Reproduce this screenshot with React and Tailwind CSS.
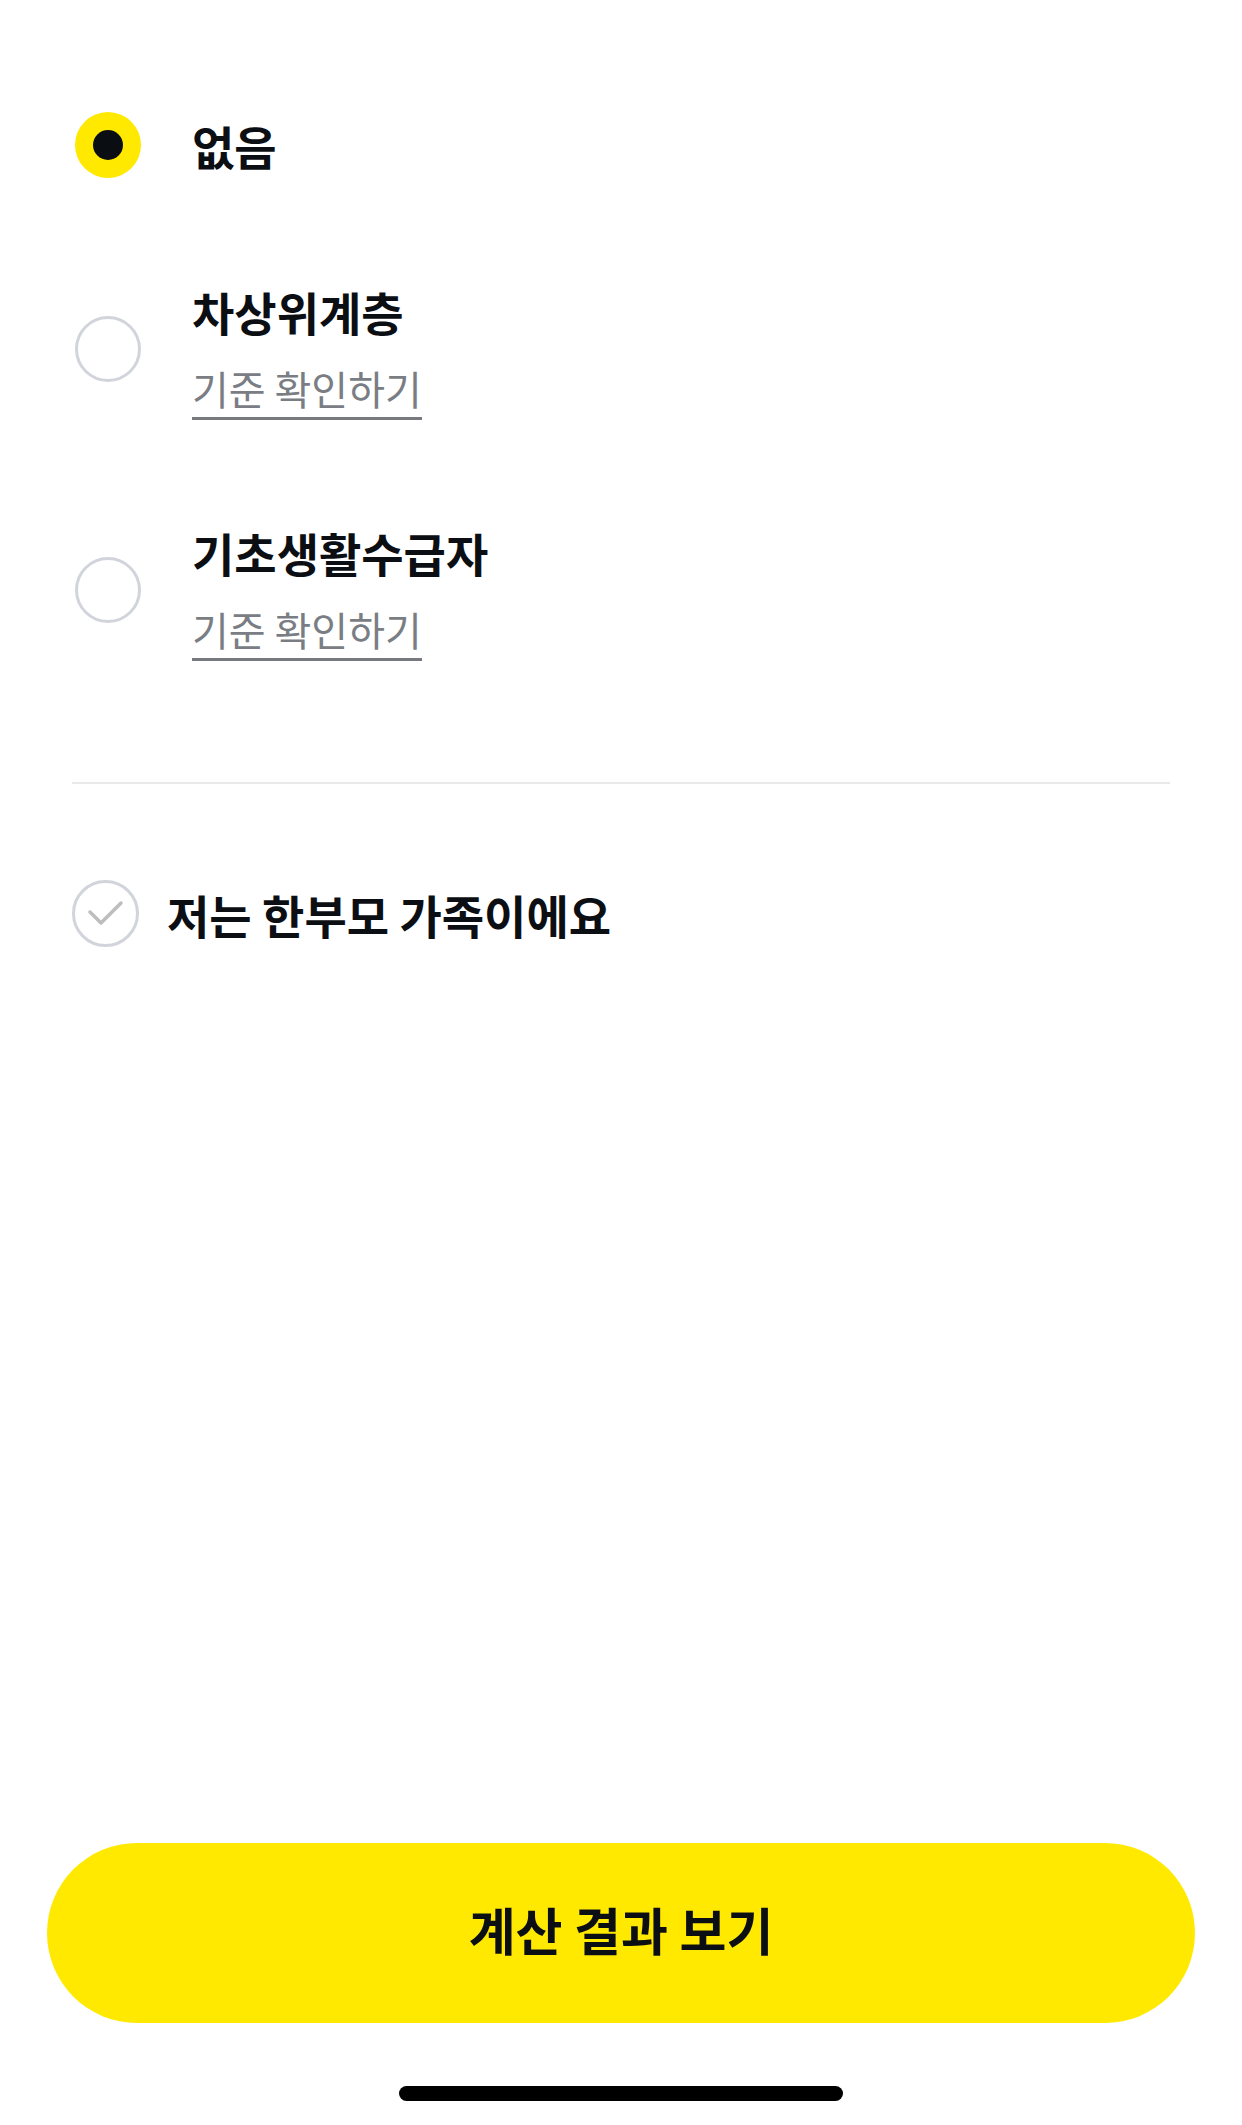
import React, { useState } from 'react';

const font = { fontFamily: '"Noto Sans CJK KR", "Noto Sans", sans-serif' };

function Radio({ checked }) {
    return (
        <div className="w-[72px] h-[72px] flex items-center justify-center shrink-0">
            {checked ? (
                <div className="w-[66px] h-[66px] rounded-full bg-[#ffe900] flex items-center justify-center">
                    <div className="w-[30px] h-[30px] rounded-full bg-[#0a0d12]" />
                </div>
            ) : (
                <div className="w-[66px] h-[66px] rounded-full border-[3px] border-[#d1d5db]" />
            )}
        </div>
    );
}

function OptionRow({ label, checked, withLink, onClick, radioOffset }) {
    if (!withLink) {
        return (
            <div className="flex items-center h-[72px] cursor-pointer" onClick={onClick}>
                <Radio checked={checked} />
                <span className="ml-[48px] text-[46px] leading-[56px] font-bold text-[#0b0e12]">{label}</span>
            </div>
        );
    }
    return (
        <div className="flex items-start cursor-pointer" onClick={onClick}>
            <div className={radioOffset}>
                <Radio checked={checked} />
            </div>
            <div className="ml-[48px] flex flex-col items-start">
                <span className="text-[46px] leading-[56px] font-bold text-[#0b0e12]">{label}</span>
                <span className="mt-[26px] text-[40px] leading-[46px] text-[#7a7e84] border-b-[3px] border-[#76797e] pb-[6px]">
                    기준 확인하기
                </span>
            </div>
        </div>
    );
}

export default function App() {
    const [selected, setSelected] = useState(0);
    const [single, setSingle] = useState(false);

    return (
        <div className="w-[1242px] h-[2125px] bg-white flex flex-col" style={font}>
            <div className="pt-[109px] px-[72px] flex flex-col">
                <OptionRow label="없음" checked={selected === 0} onClick={() => setSelected(0)} />
                <div className="mt-[102px]">
                    <OptionRow label="차상위계층" withLink radioOffset="mt-[30px]" checked={selected === 1} onClick={() => setSelected(1)} />
                </div>
                <div className="mt-[104px]">
                    <OptionRow label="기초생활수급자" withLink radioOffset="mt-[30px]" checked={selected === 2} onClick={() => setSelected(2)} />
                </div>

                <div className="mt-[121px] h-[2px] bg-[#e8e9eb]" />

                <div className="mt-[96px] flex items-center cursor-pointer" onClick={() => setSingle(!single)}>
                    <div className="w-[67px] h-[67px] rounded-full border-[3px] border-[#d1d5db] flex items-center justify-center shrink-0">
                        <svg width="40" height="30" viewBox="0 0 40 30" fill="none">
                            <path d="M4 13 L15 24 L35 4" stroke={single ? '#0a0d12' : '#bdbdbd'} strokeWidth="3.5" strokeLinecap="round" strokeLinejoin="round" />
                        </svg>
                    </div>
                    <span className="ml-[28px] text-[46px] leading-[56px] font-bold text-[#0b0e12]">저는 한부모 가족이에요</span>
                </div>
            </div>

            <div className="flex-1" />

            <div className="px-[47px]">
                <button className="w-full h-[180px] rounded-full bg-[#ffe900] text-[51px] font-bold text-[#0b0e12] pb-[7px]" style={font}>
                    계산 결과 보기
                </button>
            </div>

            <div className="mt-[63px] mb-[24px] flex justify-center">
                <div className="w-[444px] h-[15px] rounded-full bg-black" />
            </div>
        </div>
    );
}
